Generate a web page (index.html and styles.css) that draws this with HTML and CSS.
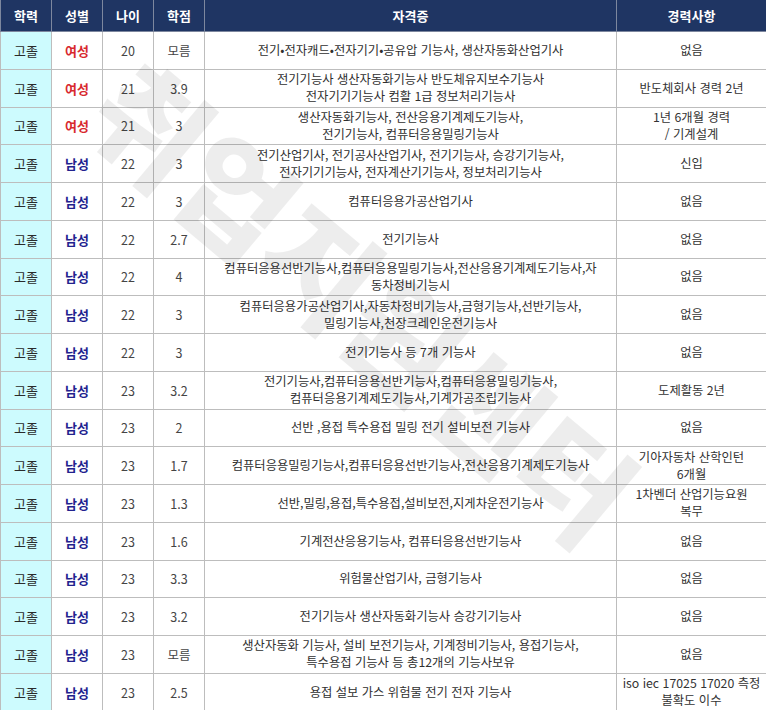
FILE: index.html
```html
<!DOCTYPE html>
<html lang="ko">
<head>
<meta charset="utf-8">
<title>자격증 현황</title>
<link rel="stylesheet" href="styles.css">
</head>
<body>
<div class="wrap">
<table class="grid">
  <colgroup>
    <col class="c-edu"><col class="c-sex"><col class="c-age"><col class="c-gpa"><col class="c-cert"><col class="c-career">
  </colgroup>
  <thead>
    <tr><th>학력</th><th>성별</th><th>나이</th><th>학점</th><th>자격증</th><th>경력사항</th></tr>
  </thead>
  <tbody>
    <tr><td class="edu">고졸</td><td class="sex f">여성</td><td class="num">20</td><td class="num">모름</td><td class="cert">전기•전자캐드•전자기기•공유압 기능사, 생산자동화산업기사</td><td class="career">없음</td></tr>
    <tr><td class="edu">고졸</td><td class="sex f">여성</td><td class="num">21</td><td class="num">3.9</td><td class="cert">전기기능사 생산자동화기능사 반도체유지보수기능사<br>전자기기기능사 컴활 1급 정보처리기능사</td><td class="career">반도체회사 경력 2년</td></tr>
    <tr><td class="edu">고졸</td><td class="sex f">여성</td><td class="num">21</td><td class="num">3</td><td class="cert">생산자동화기능사, 전산응용기계제도기능사,<br>전기기능사, 컴퓨터응용밀링기능사</td><td class="career">1년 6개월 경력<br>/ 기계설계</td></tr>
    <tr><td class="edu">고졸</td><td class="sex m">남성</td><td class="num">22</td><td class="num">3</td><td class="cert">전기산업기사, 전기공사산업기사, 전기기능사, 승강기기능사,<br>전자기기기능사, 전자계산기기능사, 정보처리기능사</td><td class="career">신입</td></tr>
    <tr><td class="edu">고졸</td><td class="sex m">남성</td><td class="num">22</td><td class="num">3</td><td class="cert">컴퓨터응용가공산업기사</td><td class="career">없음</td></tr>
    <tr><td class="edu">고졸</td><td class="sex m">남성</td><td class="num">22</td><td class="num">2.7</td><td class="cert">전기기능사</td><td class="career">없음</td></tr>
    <tr><td class="edu">고졸</td><td class="sex m">남성</td><td class="num">22</td><td class="num">4</td><td class="cert">컴퓨터응용선반기능사,컴퓨터응용밀링기능사,전산응용기계제도기능사,자<br>동차정비기능시</td><td class="career">없음</td></tr>
    <tr><td class="edu">고졸</td><td class="sex m">남성</td><td class="num">22</td><td class="num">3</td><td class="cert">컴퓨터응용가공산업기사,자동차정비기능사,금형기능사,선반기능사,<br>밀링기능사,천장크레인운전기능사</td><td class="career">없음</td></tr>
    <tr><td class="edu">고졸</td><td class="sex m">남성</td><td class="num">22</td><td class="num">3</td><td class="cert">전기기능사 등 7개 기능사</td><td class="career">없음</td></tr>
    <tr><td class="edu">고졸</td><td class="sex m">남성</td><td class="num">23</td><td class="num">3.2</td><td class="cert">전기기능사,컴퓨터응용선반기능사,컴퓨터응용밀링기능사,<br>컴퓨터응용기계제도기능사,기계가공조립기능사</td><td class="career">도제활동 2년</td></tr>
    <tr><td class="edu">고졸</td><td class="sex m">남성</td><td class="num">23</td><td class="num">2</td><td class="cert">선반 ,용접 특수용접 밀링 전기 설비보전 기능사</td><td class="career">없음</td></tr>
    <tr><td class="edu">고졸</td><td class="sex m">남성</td><td class="num">23</td><td class="num">1.7</td><td class="cert">컴퓨터응용밀링기능사,컴퓨터응용선반기능사,전산응용기계제도기능사</td><td class="career">기아자동차 산학인턴<br>6개월</td></tr>
    <tr><td class="edu">고졸</td><td class="sex m">남성</td><td class="num">23</td><td class="num">1.3</td><td class="cert">선반,밀링,용접,특수용접,설비보전,지게차운전기능사</td><td class="career">1차벤더 산업기능요원<br>복무</td></tr>
    <tr><td class="edu">고졸</td><td class="sex m">남성</td><td class="num">23</td><td class="num">1.6</td><td class="cert">기계전산응용기능사, 컴퓨터응용선반기능사</td><td class="career">없음</td></tr>
    <tr><td class="edu">고졸</td><td class="sex m">남성</td><td class="num">23</td><td class="num">3.3</td><td class="cert">위험물산업기사, 금형기능사</td><td class="career">없음</td></tr>
    <tr><td class="edu">고졸</td><td class="sex m">남성</td><td class="num">23</td><td class="num">3.2</td><td class="cert">전기기능사 생산자동화기능사 승강기기능사</td><td class="career">없음</td></tr>
    <tr><td class="edu">고졸</td><td class="sex m">남성</td><td class="num">23</td><td class="num">모름</td><td class="cert">생산자동화 기능사, 설비 보전기능사, 기계정비기능사, 용접기능사,<br>특수용접 기능사 등 총12개의 기능사보유</td><td class="career">없음</td></tr>
    <tr><td class="edu">고졸</td><td class="sex m">남성</td><td class="num">23</td><td class="num">2.5</td><td class="cert">용접 설보 가스 위험물 전기 전자 기능사</td><td class="career">iso iec 17025 17020 측정<br>불확도 이수</td></tr>
  </tbody>
</table>
<div class="mark mark-main" aria-hidden="true">취업지원센터</div>
</div>
</body>
</html>
```

FILE: styles.css
```css
html, body {
  margin: 0;
  padding: 0;
  background: #ffffff;
}

body {
  font-family: "Noto Sans CJK KR", "Noto Sans", sans-serif;
  color: #333333;
}

.wrap {
  position: relative;
  width: 766px;
  height: 710px;
  overflow: hidden;
}

.grid {
  border-collapse: collapse;
  table-layout: fixed;
  width: 766px;
}

.c-edu, .c-sex, .c-age, .c-gpa { width: 51px; }
.c-cert { width: 412px; }
.c-career { width: 150px; }

.grid th {
  height: 31px;
  padding: 0;
  background: #1f3563;
  color: #ffffff;
  font-size: 13px;
  font-weight: 700;
  text-align: center;
  vertical-align: middle;
  border: 1px solid #7d879e;
  border-top: none;
}

.grid td {
  height: 36.75px;
  padding: 0 2px;
  border: 1px solid #bdbdbd;
  text-align: center;
  vertical-align: middle;
  font-size: 12.5px;
  line-height: 17px;
  color: #333333;
}

.grid td.edu {
  background: #cdfbfe;
  font-size: 13px;
  color: #2a2a2a;
}

.grid td.sex {
  font-size: 13px;
  font-weight: 700;
}

.grid td.f { color: #d8282e; }
.grid td.m { color: #22228e; }

.grid td.num {
  font-size: 12.5px;
  color: #444444;
}

.grid td.cert {
  font-size: 12.3px;
  padding: 0;
  white-space: nowrap;
  color: #2f2f2f;
}

.grid td.career {
  font-size: 12.3px;
  padding: 0;
  white-space: nowrap;
}

.mark {
  position: absolute;
  pointer-events: none;
  font-weight: 900;
  color: rgba(0, 0, 0, 0.07);
  white-space: nowrap;
  transform-origin: 0 0;
}

.mark-main {
  left: 150px;
  top: 40px;
  font-size: 120px;
  line-height: 1;
  transform: rotate(40deg);
}
```
